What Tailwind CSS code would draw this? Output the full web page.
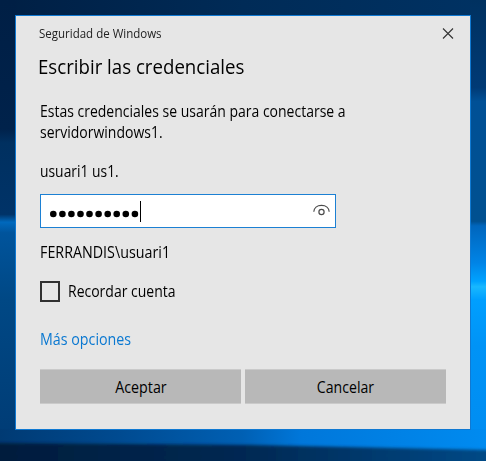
<!DOCTYPE html>
<html lang="es">
<head>
<meta charset="utf-8">
<title>Seguridad de Windows</title>
<script src="https://cdn.jsdelivr.net/npm/@tailwindcss/browser@4"></script>
</head>
<body class="w-[486px] h-[461px] overflow-hidden relative bg-[#002d5f] font-['Open_Sans','Noto_Sans',sans-serif]">
<!-- Wallpaper -->
<svg class="absolute inset-0" width="486" height="461" viewBox="0 0 486 461" aria-hidden="true">
  <defs>
    <linearGradient id="top" x1="0" x2="1"><stop offset="0" stop-color="#001f44"/><stop offset=".5" stop-color="#002b57"/><stop offset="1" stop-color="#003263"/></linearGradient>
    <linearGradient id="left" x1="0" y1="0" x2="0" y2="1"><stop offset="0" stop-color="#001f45"/><stop offset=".28" stop-color="#00224b"/><stop offset=".31" stop-color="#003060"/><stop offset=".465" stop-color="#003368"/><stop offset=".482" stop-color="#0069bd"/><stop offset=".505" stop-color="#00549c"/><stop offset=".65" stop-color="#004885"/><stop offset="1" stop-color="#003a73"/></linearGradient>
    <linearGradient id="right" x1="0" y1="0" x2="0" y2="1"><stop offset="0" stop-color="#003160"/><stop offset=".19" stop-color="#003a75"/><stop offset=".22" stop-color="#005096"/><stop offset=".48" stop-color="#005090"/><stop offset=".49" stop-color="#0066bd"/><stop offset=".57" stop-color="#0084e6"/><stop offset=".61" stop-color="#00a2ff"/><stop offset=".622" stop-color="#18b8ff"/><stop offset=".65" stop-color="#009fff"/><stop offset=".75" stop-color="#0093f6"/><stop offset="1" stop-color="#008bf0"/></linearGradient>
    <linearGradient id="bottom" x1="0" x2="1"><stop offset="0" stop-color="#003a73"/><stop offset=".25" stop-color="#004b91"/><stop offset=".5" stop-color="#0060b4"/><stop offset=".62" stop-color="#0077da"/><stop offset="1" stop-color="#008bf0"/></linearGradient>
    <linearGradient id="floor" x1="0" x2="1"><stop offset="0" stop-color="#001c3c"/><stop offset=".5" stop-color="#002852"/><stop offset="1" stop-color="#004a88"/></linearGradient>
    <filter id="soft" x="-5%" y="-20%" width="110%" height="140%"><feGaussianBlur stdDeviation="1.5"/></filter>
  </defs>
  <rect width="486" height="16" fill="url(#top)"/>
  <rect width="16" height="461" fill="url(#left)"/>
  <rect x="470" width="16" height="461" fill="url(#right)"/>
  <rect y="429" width="486" height="32" fill="url(#bottom)"/>
  <path d="M-10 443L250 445L496 450V480H-10Z" fill="url(#floor)" filter="url(#soft)"/>
</svg>

<main class="relative mt-[15px] ml-[15px] w-[456px] h-[415px] border border-[#1079d2] bg-[#e6e6e6] text-black flex flex-col pl-6 pr-6">
  <header class="-ml-px h-[36px] flex items-start justify-between">
    <h1 class="mt-[7px] text-[13px] leading-[20px] text-[#222] whitespace-nowrap origin-left scale-x-[0.885]">Seguridad de Windows</h1>
    <svg class="mt-[12px] -mr-[8px]" width="12" height="12" viewBox="0 0 12 12" fill="none" stroke="#333" stroke-width="1.1"><path d="M1 .5L11 10.500M11 .5L1 10.500"/></svg>
  </header>
  <h2 class="-ml-[2px] text-[20.5px] leading-[28px] self-start whitespace-nowrap origin-left scale-x-[0.91]">Escribir las credenciales</h2>
  <p class="mt-[21px] text-[15.5px] leading-[21px] self-start whitespace-nowrap origin-left scale-x-[0.903]">Estas credenciales se usarán para conectarse a<br>servidorwindows1.</p>
  <p class="mt-[18px] text-[15.5px] leading-[21px] self-start whitespace-nowrap origin-left scale-x-[0.895]">usuari1 us1.</p>
  <div class="mt-[12px] w-[296px] h-[34px] shrink-0 border border-[#1c80d3] bg-white flex items-start justify-between pl-[9px] pr-[6px]">
    <div class="flex items-start">
      <svg class="mt-[15px]" width="90" height="8" viewBox="0 0 90 8"><g><circle cx="3.300" cy="4" r="3.3"/><circle cx="12.400" cy="4" r="3.3"/><circle cx="21.400" cy="4" r="3.3"/><circle cx="30.500" cy="4" r="3.3"/><circle cx="39.500" cy="4" r="3.3"/><circle cx="48.600" cy="4" r="3.3"/><circle cx="57.700" cy="4" r="3.3"/><circle cx="66.700" cy="4" r="3.3"/><circle cx="75.800" cy="4" r="3.3"/><circle cx="84.900" cy="4" r="3.3"/></g></svg>
      <span class="mt-[6px] w-px h-[21px] bg-black"></span>
    </div>
    <svg class="mt-[9px] -mr-px" width="17" height="13" viewBox="0 0 17 13" fill="none" stroke="#4a4a4a" stroke-width="1.2"><path d="M.8 7.800C1 4 4 1.300 8.500 1.300S16 4 16.200 7.800"/><circle cx="8.500" cy="8" r="2.600"/></svg>
  </div>
  <p class="mt-[14px] text-[15.5px] leading-[21px] self-start whitespace-nowrap origin-left scale-x-[0.922]">FERRANDIS\usuari1</p>
  <label class="mt-[18px] h-[21px] flex items-center gap-2">
    <span class="w-5 h-[21px] border-2 border-[#303030]"></span>
    <span class="text-[15.5px] leading-[21px] whitespace-nowrap origin-left scale-x-[0.903]">Recordar cuenta</span>
  </label>
  <a class="mt-[27px] text-[15.5px] leading-[21px] self-start whitespace-nowrap origin-left scale-x-[0.92] text-[#0a78d1]">Más opciones</a>
  <div class="mt-[19px] flex gap-1">
    <button class="w-[201px] h-[35px] border-y border-[#cacaca] bg-[#b8b8b8] text-[15.5px] leading-[21px]"><span class="inline-block translate-y-px scale-x-[0.92]">Aceptar</span></button>
    <button class="w-[201px] h-[35px] border-y border-[#cacaca] bg-[#b8b8b8] text-[15.5px] leading-[21px]"><span class="inline-block translate-y-px scale-x-[0.91]">Cancelar</span></button>
  </div>
</main>
</body>
</html>
